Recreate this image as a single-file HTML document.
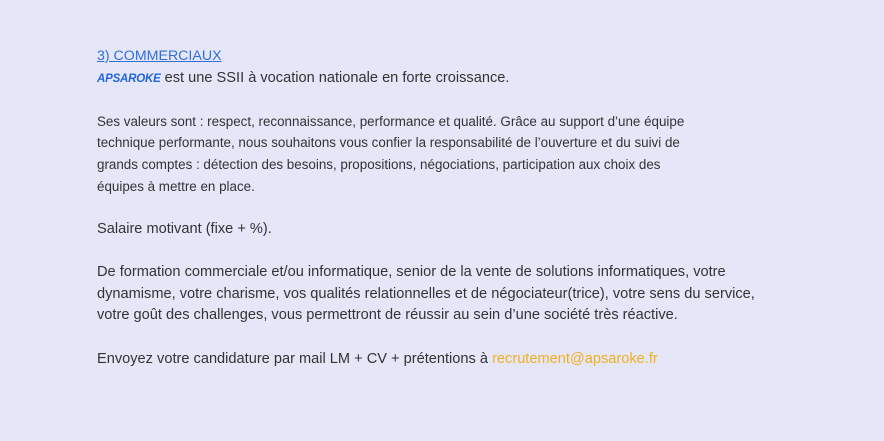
<!DOCTYPE html>
<html><head><meta charset="utf-8"><style>
html,body{margin:0;padding:0;}
body{width:884px;height:441px;background:#e6e6f9;font-family:"Liberation Sans",sans-serif;font-size:14.6px;line-height:21.5px;color:#333;overflow:hidden;}
.c{position:absolute;left:97px;top:46px;width:760px;white-space:nowrap;}
p{margin:0 0 21.7px 0;line-height:21.6px;}
p span,p a{line-height:1;}
.s{font-size:13.4px;}
a.h{color:#2f6fd8;text-decoration:underline;font-size:14.2px;}
.logo{color:#2266d8;font-weight:bold;font-style:italic;font-size:11.5px;letter-spacing:-0.2px;}
.m{color:#f0b020;}
</style></head><body><div class="c">
<p><a class="h">3) COMMERCIAUX</a><br><span class="logo">APSAROKE</span> est une SSII à vocation nationale en forte croissance.</p>
<p class="s">Ses valeurs sont : respect, reconnaissance, performance et qualité. Grâce au support d’une équipe<br>technique performante, nous souhaitons vous confier la responsabilité de l’ouverture et du suivi de<br>grands comptes : détection des besoins, propositions, négociations, participation aux choix des<br>équipes à mettre en place.</p>
<p>Salaire motivant (fixe + %).</p>
<p>De formation commerciale et/ou informatique, senior de la vente de solutions informatiques, votre<br>dynamisme, votre charisme, vos qualités relationnelles et de négociateur(trice), votre sens du service,<br>votre goût des challenges, vous permettront de réussir au sein d’une société très réactive.</p>
<p>Envoyez votre candidature par mail LM + CV + prétentions à <span class="m">recrutement@apsaroke.fr</span></p>
</div></body></html>
